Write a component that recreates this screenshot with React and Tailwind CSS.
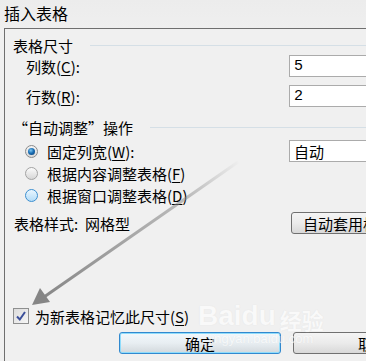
import React from "react";

function Radio({ kind }) {
  if (kind === "on") {
    return (
      <span className="shrink-0 w-[13px] h-[13px] rounded-full border border-[#8b8b8b] bg-gradient-to-b from-[#f4f4f4] to-[#d9d9d9] flex items-center justify-center">
        <span className="w-[7px] h-[7px] rounded-full bg-[radial-gradient(circle_at_40%_35%,#7fc7f2_0%,#1a6fb5_45%,#0b3a6e_100%)]"></span>
      </span>
    );
  }
  if (kind === "hover") {
    return (
      <span className="shrink-0 w-[13px] h-[13px] rounded-full border border-[#3c8fd0] bg-gradient-to-b from-[#e9f6ff] to-[#b4dcf7]"></span>
    );
  }
  return (
    <span className="shrink-0 w-[13px] h-[13px] rounded-full border border-[#a3a3a3] bg-gradient-to-b from-[#fbfbfb] to-[#d6d6d6]"></span>
  );
}

function U({ children }) {
  return <span className="underline underline-offset-2">{children}</span>;
}

export default function App() {
  return (
    <div className="w-[366px] h-[361px] bg-[#f0f0f0] overflow-hidden relative font-['Noto_Sans_CJK_SC',sans-serif] text-[15px] text-black leading-none">
      {/* title bar */}
      <div className="h-[28px] pl-[4px] flex items-center bg-gradient-to-b from-[#ececec] to-[#efefef] text-[16px]">
        <span className="-mt-[2px]">插入表格</span>
      </div>
      {/* panel */}
      <div className="ml-[4px] h-[333px] border-l border-t border-[#6f6f6f] flex flex-col overflow-hidden">
        {/* header 1 */}
        <div className="mt-[7px] h-[18px] flex items-center pl-[8px] gap-[17px]">
          <span className="shrink-0">表格尺寸</span>
          <span className="flex-1 h-px bg-[#d5dfe6]"></span>
        </div>
        {/* columns */}
        <div className="mt-[1px] h-[22px] flex items-center">
          <span className="shrink-0 pl-[21px] w-[284px]">列数(<U>C</U>):</span>
          <div className="shrink-0 h-[22px] w-[100px] border border-[#ababab] bg-white flex items-center pl-[4px] font-['Liberation_Mono',monospace] text-[15px]">5</div>
        </div>
        {/* rows */}
        <div className="mt-[8px] h-[22px] flex items-center">
          <span className="shrink-0 pl-[21px] w-[284px]">行数(<U>R</U>):</span>
          <div className="shrink-0 h-[22px] w-[100px] border border-[#ababab] bg-white flex items-center pl-[4px] font-['Liberation_Mono',monospace] text-[15px]">2</div>
        </div>
        {/* header 2 */}
        <div className="mt-[11px] h-[18px] flex items-center pl-[8px] gap-[17px]">
          <span className="shrink-0">“自动调整”操作</span>
          <span className="flex-1 h-px bg-[#d5dfe6]"></span>
        </div>
        {/* radio group */}
        <div className="mt-[4px] flex">
          <div className="shrink-0 w-[284px] flex flex-col">
            <div className="h-[22px] flex items-center pl-[20px] gap-[9px]">
              <Radio kind="on" />
              <span className="whitespace-nowrap">固定列宽(<U>W</U>):</span>
            </div>
            <div className="h-[22px] flex items-center pl-[20px] gap-[9px]">
              <Radio kind="off" />
              <span className="whitespace-nowrap">根据内容调整表格(<U>F</U>)</span>
            </div>
            <div className="h-[22px] flex items-center pl-[20px] gap-[9px]">
              <Radio kind="hover" />
              <span className="whitespace-nowrap">根据窗口调整表格(<U>D</U>)</span>
            </div>
          </div>
          <div className="shrink-0 h-[22px] w-[100px] border border-[#ababab] bg-white flex items-center pl-[4px]">自动</div>
        </div>
        {/* style row */}
        <div className="mt-[6px] h-[22px] flex items-center">
          <span className="shrink-0 pl-[9px] w-[286px] whitespace-nowrap">表格样式:&nbsp; 网格型</span>
          <div className="shrink-0 h-[22px] w-[110px] border border-[#707070] rounded-[3px] bg-gradient-to-b from-[#f4f4f4] via-[#ebebeb] to-[#d8d8d8] flex items-center pl-[11px] whitespace-nowrap">
            自动套用格式
          </div>
        </div>
        {/* checkbox */}
        <div className="mt-[71px] h-[22px] flex items-center pl-[8px] gap-[6px]">
          <span className="shrink-0 w-[16px] h-[16px] border border-[#8e8f8f] bg-gradient-to-br from-[#dcdcdc] to-[#f6f6f6] flex items-center justify-center">
            <svg width="12" height="12" viewBox="0 0 12 12">
              <path d="M2 6.5 L4.8 9.5 L10 2" fill="none" stroke="#3b4f9a" strokeWidth="2" />
            </svg>
          </span>
          <span className="whitespace-nowrap">为新表格记忆此尺寸(<U>S</U>)</span>
        </div>
        {/* buttons */}
        <div className="mt-[5px] h-[22px] flex pl-[114px] gap-[12px]">
          <div className="shrink-0 w-[162px] h-[22px] rounded-[3px] border border-[#3189cf] shadow-[inset_0_0_0_1px_#8fdcfb] bg-gradient-to-b from-[#f2f8fc] via-[#e8eef2] to-[#d2d8dc] flex items-center justify-center">
            确定
          </div>
          <div className="shrink-0 w-[120px] h-[22px] rounded-[3px] border border-[#707070] bg-gradient-to-b from-[#f4f4f4] via-[#ebebeb] to-[#d8d8d8] flex items-center pl-[64px] whitespace-nowrap">
            取消
          </div>
        </div>
      </div>

      {/* annotation arrow */}
      <svg className="absolute left-0 top-0 pointer-events-none" width="366" height="361" viewBox="0 0 366 361">
        <defs>
          <linearGradient id="ar" x1="240" y1="160" x2="40" y2="300" gradientUnits="userSpaceOnUse">
            <stop offset="0" stopColor="#8a8a8a" stopOpacity="0" />
            <stop offset="0.25" stopColor="#8a8a8a" stopOpacity="0.5" />
            <stop offset="1" stopColor="#858585" stopOpacity="1" />
          </linearGradient>
        </defs>
        <path d="M238 162 L44 297" stroke="url(#ar)" strokeWidth="3" fill="none" />
        <path d="M32 305 L40 288 L50 302 Z" fill="#858585" />
      </svg>

      {/* watermark */}
      <div className="absolute left-[198px] top-[302px] pointer-events-none flex flex-col items-center text-white opacity-60 font-['Liberation_Sans',sans-serif]">
        <div className="flex items-end text-[28px] font-bold leading-none [text-shadow:0_0_1px_#d8d8d8]">
          <span>Bai</span>
          <span>du</span>
          <span className="text-[22px] ml-[4px] font-['Noto_Sans_CJK_SC',sans-serif]">经验</span>
        </div>
        <div className="text-[13px] mt-[2px] [text-shadow:0_0_1px_#d8d8d8]">jingyan.baidu.com</div>
      </div>
    </div>
  );
}
